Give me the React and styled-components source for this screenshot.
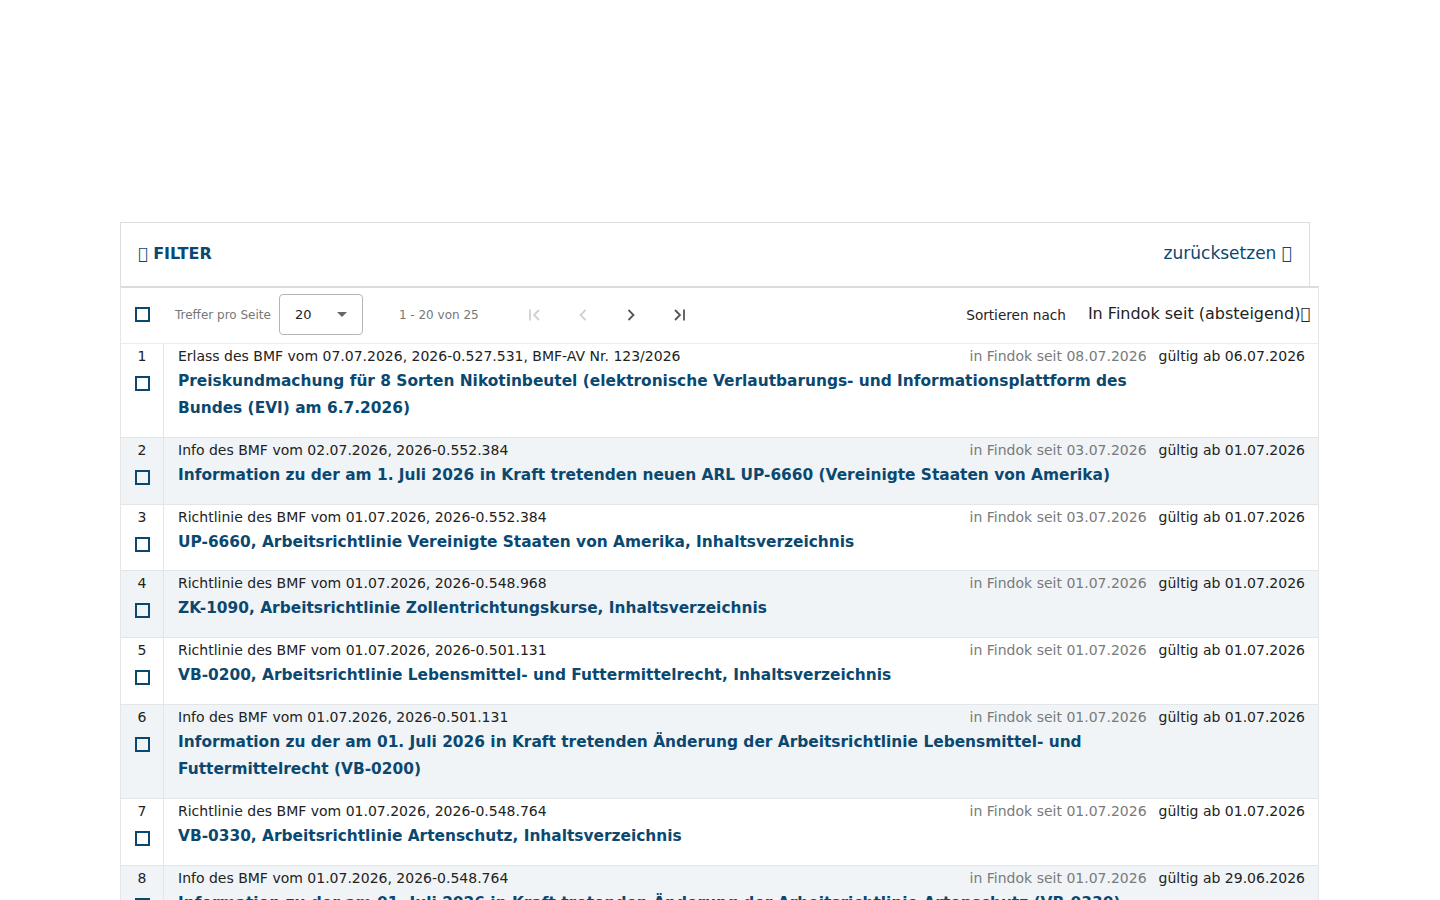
import React from 'react';
import styled, { createGlobalStyle } from 'styled-components';

const GlobalStyle = createGlobalStyle`
    body {
        margin: 0;
        background: #fff;
        font-family: "DejaVu Sans", "Liberation Sans", sans-serif;
        color: #222;
    }
`;

const TOFU = '\uE900';

const rows = [
    {
        meta: 'Erlass des BMF vom 07.07.2026, 2026-0.527.531, BMF-AV Nr. 123/2026',
        title: 'Preiskundmachung für 8 Sorten Nikotinbeutel (elektronische Verlautbarungs- und Informationsplattform des Bundes (EVI) am 6.7.2026)',
        seit: '08.07.2026',
        ab: '06.07.2026',
    },
    {
        meta: 'Info des BMF vom 02.07.2026, 2026-0.552.384',
        title: 'Information zu der am 1. Juli 2026 in Kraft tretenden neuen ARL UP-6660 (Vereinigte Staaten von Amerika)',
        seit: '03.07.2026',
        ab: '01.07.2026',
    },
    {
        meta: 'Richtlinie des BMF vom 01.07.2026, 2026-0.552.384',
        title: 'UP-6660, Arbeitsrichtlinie Vereinigte Staaten von Amerika, Inhaltsverzeichnis',
        seit: '03.07.2026',
        ab: '01.07.2026',
    },
    {
        meta: 'Richtlinie des BMF vom 01.07.2026, 2026-0.548.968',
        title: 'ZK-1090, Arbeitsrichtlinie Zollentrichtungskurse, Inhaltsverzeichnis',
        seit: '01.07.2026',
        ab: '01.07.2026',
    },
    {
        meta: 'Richtlinie des BMF vom 01.07.2026, 2026-0.501.131',
        title: 'VB-0200, Arbeitsrichtlinie Lebensmittel- und Futtermittelrecht, Inhaltsverzeichnis',
        seit: '01.07.2026',
        ab: '01.07.2026',
    },
    {
        meta: 'Info des BMF vom 01.07.2026, 2026-0.501.131',
        title: 'Information zu der am 01. Juli 2026 in Kraft tretenden Änderung der Arbeitsrichtlinie Lebensmittel- und Futtermittelrecht (VB-0200)',
        seit: '01.07.2026',
        ab: '01.07.2026',
    },
    {
        meta: 'Richtlinie des BMF vom 01.07.2026, 2026-0.548.764',
        title: 'VB-0330, Arbeitsrichtlinie Artenschutz, Inhaltsverzeichnis',
        seit: '01.07.2026',
        ab: '01.07.2026',
    },
    {
        meta: 'Info des BMF vom 01.07.2026, 2026-0.548.764',
        title: 'Information zu der am 01. Juli 2026 in Kraft tretenden Änderung der Arbeitsrichtlinie Artenschutz (VB-0330)',
        seit: '01.07.2026',
        ab: '29.06.2026',
    },
];

function PageIcon({ type, disabled }) {
    const color = disabled ? '#d0d0d0' : '#555';
    return (
        <IconButton>
            <svg width="16" height="16" viewBox="0 0 16 16" fill="none" stroke={color} strokeWidth="1.8">
                {type === 'first' && <><path d="M3 2.5v11" /><path d="M12 3l-5 5 5 5" /></>}
                {type === 'prev' && <path d="M10.5 3l-5 5 5 5" />}
                {type === 'next' && <path d="M5.5 3l5 5-5 5" />}
                {type === 'last' && <><path d="M4 3l5 5-5 5" /><path d="M13 2.5v11" /></>}
            </svg>
        </IconButton>
    );
}

function App() {
    return (
        <>
            <GlobalStyle />
            <Page>
                <FilterBar>
                    <FilterTitle><Tofu>{TOFU}</Tofu> FILTER</FilterTitle>
                    <ResetLink>zurücksetzen <Tofu>{TOFU}</Tofu></ResetLink>
                </FilterBar>
                <Results>
                    <Toolbar>
                        <CheckCell><Checkbox /></CheckCell>
                        <SmallLabel>Treffer pro Seite</SmallLabel>
                        <Select>
                            <span>20</span>
                            <Caret />
                        </Select>
                        <RangeText>1 - 20 von 25</RangeText>
                        <Pager>
                            <PageIcon type="first" disabled />
                            <PageIcon type="prev" disabled />
                            <PageIcon type="next" />
                            <PageIcon type="last" />
                        </Pager>
                        <Spacer />
                        <SortLabel>Sortieren nach</SortLabel>
                        <SortValue>In Findok seit (absteigend)<Tofu>{TOFU}</Tofu></SortValue>
                    </Toolbar>
                    {rows.map((row, i) => (
                        <Row key={i} striped={i % 2 === 1}>
                            <NumCell>
                                <Num>{i + 1}</Num>
                                <Checkbox />
                            </NumCell>
                            <Body>
                                <MetaLine>
                                    <Meta>{row.meta}</Meta>
                                    <Dates>
                                        <Seit>in Findok seit {row.seit}</Seit>
                                        <Ab>gültig ab {row.ab}</Ab>
                                    </Dates>
                                </MetaLine>
                                <Title>{row.title}</Title>
                            </Body>
                        </Row>
                    ))}
                </Results>
            </Page>
        </>
    );
}

const Page = styled.div`
    padding: 222px 0 0 120px;
    width: 1199px;
`;

const Tofu = styled.span`
    font-family: "DejaVu Sans", sans-serif;
    font-weight: normal;
`;

const FilterBar = styled.div`
    box-sizing: border-box;
    width: 1190px;
    height: 64px;
    border: 1px solid #dedede;
    border-bottom: none;
    display: flex;
    align-items: center;
    justify-content: space-between;
    padding: 0 17px 2px 17px;
`;

const FilterTitle = styled.div`
    font-size: 16px;
    font-weight: bold;
    color: #0b4870;
`;

const ResetLink = styled.div`
    font-size: 17px;
    color: #0b4870;
    margin-top: -2px;
`;

const Results = styled.div`
    border-top: 2px solid #dcdcdc;
    border-left: 1px solid #e6e6e6;
    border-right: 1px solid #e6e6e6;
`;

const Toolbar = styled.div`
    height: 53px;
    padding: 0 8px 2px 0;
    display: flex;
    align-items: center;
    border-bottom: 1px solid #ececec;
`;

const CheckCell = styled.div`
    width: 43px;
    display: flex;
    justify-content: center;
`;

const Checkbox = styled.span`
    display: block;
    box-sizing: border-box;
    width: 15px;
    height: 15px;
    border: 2px solid #0b4870;
`;

const SmallLabel = styled.span`
    font-size: 12px;
    color: #777;
    margin-left: 11px;
`;

const Select = styled.div`
    box-sizing: border-box;
    width: 84px;
    height: 41px;
    margin-left: 8px;
    border: 1px solid #b5b5b5;
    border-radius: 4px;
    display: flex;
    align-items: center;
    justify-content: space-between;
    padding: 0 15px 0 15px;
    font-size: 13px;
    color: #222;
`;

const Caret = styled.span`
    width: 0;
    height: 0;
    border-left: 5px solid transparent;
    border-right: 5px solid transparent;
    border-top: 5px solid #666;
`;

const RangeText = styled.span`
    font-size: 12px;
    color: #777;
    margin-left: 36px;
`;

const Pager = styled.div`
    display: flex;
    gap: 16px;
    margin-left: 40px;
`;

const IconButton = styled.span`
    width: 32px;
    height: 32px;
    display: flex;
    align-items: center;
    justify-content: center;
`;

const Spacer = styled.div`
    flex: 1;
`;

const SortLabel = styled.span`
    font-size: 13.6px;
    color: #222;
`;

const SortValue = styled.span`
    font-size: 16px;
    color: #222;
    margin-left: 22px;
    margin-top: -2px;
`;

const Row = styled.div`
    display: flex;
    background: ${p => (p.striped ? '#f0f4f6' : '#fff')};
    border-bottom: 1px solid #e2e6e8;
`;

const NumCell = styled.div`
    width: 42px;
    flex-shrink: 0;
    border-right: 1px solid #e2e6e8;
    display: flex;
    flex-direction: column;
    align-items: center;
    padding-top: 2px;
`;

const Num = styled.div`
    font-size: 14px;
    line-height: 20px;
    color: #222;
    margin-bottom: 10px;
`;

const Body = styled.div`
    flex: 1;
    padding: 2px 13px 14.8px 14px;
`;

const MetaLine = styled.div`
    display: flex;
    justify-content: space-between;
    font-size: 14px;
    line-height: 20px;
`;

const Meta = styled.span`
    color: #222;
`;

const Dates = styled.span`
    display: flex;
    gap: 12px;
`;

const Seit = styled.span`
    color: #7a7a7a;
`;

const Ab = styled.span`
    color: #222;
`;

const Title = styled.div`
    max-width: 980px;
    margin-top: 2px;
    font-size: 15.4px;
    line-height: 27px;
    font-weight: bold;
    color: #0b4870;
`;

export default App;
